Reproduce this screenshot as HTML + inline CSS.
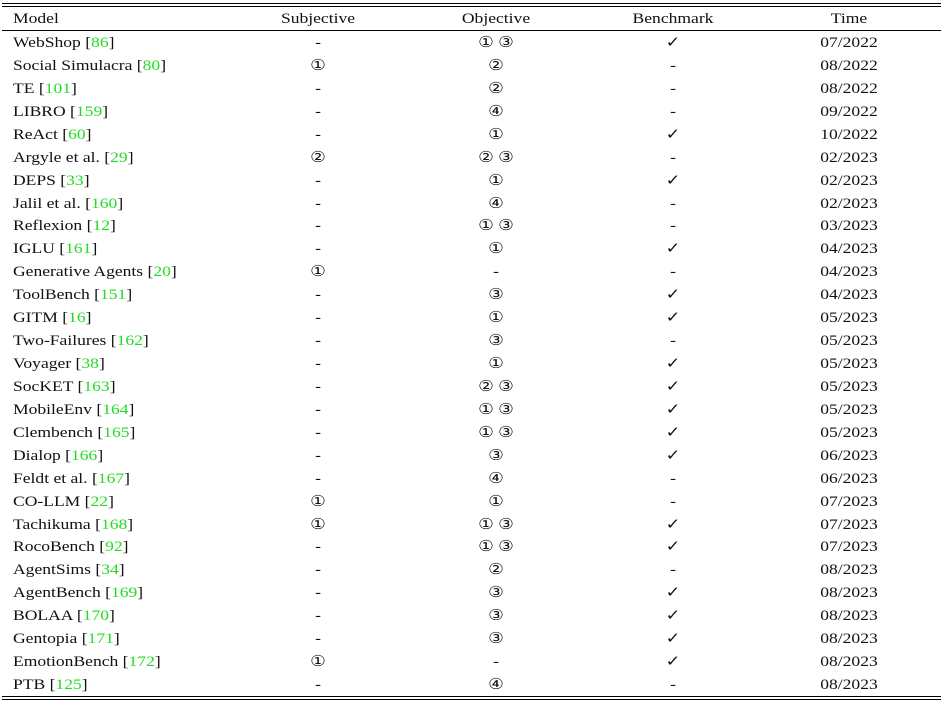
<!DOCTYPE html>
<html><head><meta charset="utf-8"><style>
body{margin:0;width:943px;height:703px;background:#fff;position:relative;font-family:"Liberation Serif","DejaVu Serif",serif;font-size:15px;color:#111;overflow:hidden}
.l{position:absolute;left:2px;right:2px;height:1px;background:#000}
.r{position:absolute;left:0;width:943px;height:18px;line-height:18px}
.r span{position:absolute;white-space:nowrap}
.a{left:13px;transform:scaleX(1.17);transform-origin:left center}
.b,.c,.d,.e{transform:translateX(-50%) scaleX(1.17)}
.b{left:318px}.c{left:496px}.d{left:673px}.e{left:849px}
g{color:#22dd22}
</style></head><body>
<div class="l" style="top:3px"></div><div class="l" style="top:6px"></div>
<div class="l" style="top:30px"></div>
<div class="l" style="top:696px"></div><div class="l" style="top:699px"></div>
<div id="t"></div>
<script>
var rows=[["Model","Subjective","Objective","Benchmark","Time",1],
["WebShop [<g>86</g>]","-","① ③","✓","07/2022"],
["Social Simulacra [<g>80</g>]","①","②","-","08/2022"],
["TE [<g>101</g>]","-","②","-","08/2022"],
["LIBRO [<g>159</g>]","-","④","-","09/2022"],
["ReAct [<g>60</g>]","-","①","✓","10/2022"],
["Argyle et al. [<g>29</g>]","②","② ③","-","02/2023"],
["DEPS [<g>33</g>]","-","①","✓","02/2023"],
["Jalil et al. [<g>160</g>]","-","④","-","02/2023"],
["Reflexion [<g>12</g>]","-","① ③","-","03/2023"],
["IGLU [<g>161</g>]","-","①","✓","04/2023"],
["Generative Agents [<g>20</g>]","①","-","-","04/2023"],
["ToolBench [<g>151</g>]","-","③","✓","04/2023"],
["GITM [<g>16</g>]","-","①","✓","05/2023"],
["Two-Failures [<g>162</g>]","-","③","-","05/2023"],
["Voyager [<g>38</g>]","-","①","✓","05/2023"],
["SocKET [<g>163</g>]","-","② ③","✓","05/2023"],
["MobileEnv [<g>164</g>]","-","① ③","✓","05/2023"],
["Clembench [<g>165</g>]","-","① ③","✓","05/2023"],
["Dialop [<g>166</g>]","-","③","✓","06/2023"],
["Feldt et al. [<g>167</g>]","-","④","-","06/2023"],
["CO-LLM [<g>22</g>]","①","①","-","07/2023"],
["Tachikuma [<g>168</g>]","①","① ③","✓","07/2023"],
["RocoBench [<g>92</g>]","-","① ③","✓","07/2023"],
["AgentSims [<g>34</g>]","-","②","-","08/2023"],
["AgentBench [<g>169</g>]","-","③","✓","08/2023"],
["BOLAA [<g>170</g>]","-","③","✓","08/2023"],
["Gentopia [<g>171</g>]","-","③","✓","08/2023"],
["EmotionBench [<g>172</g>]","①","-","✓","08/2023"],
["PTB [<g>125</g>]","-","④","-","08/2023"]];
var h="";rows.forEach(function(r,i){var y=i==0?18:42+(i-1)*22.93;
h+='<div class="r" style="top:'+(y-8)+'px"><span class="a">'+r[0]+'</span><span class="b">'+r[1]+'</span><span class="c">'+r[2]+'</span><span class="d">'+r[3]+'</span><span class="e">'+r[4]+'</span></div>';});
document.getElementById("t").innerHTML=h;
</script>
</body></html>
